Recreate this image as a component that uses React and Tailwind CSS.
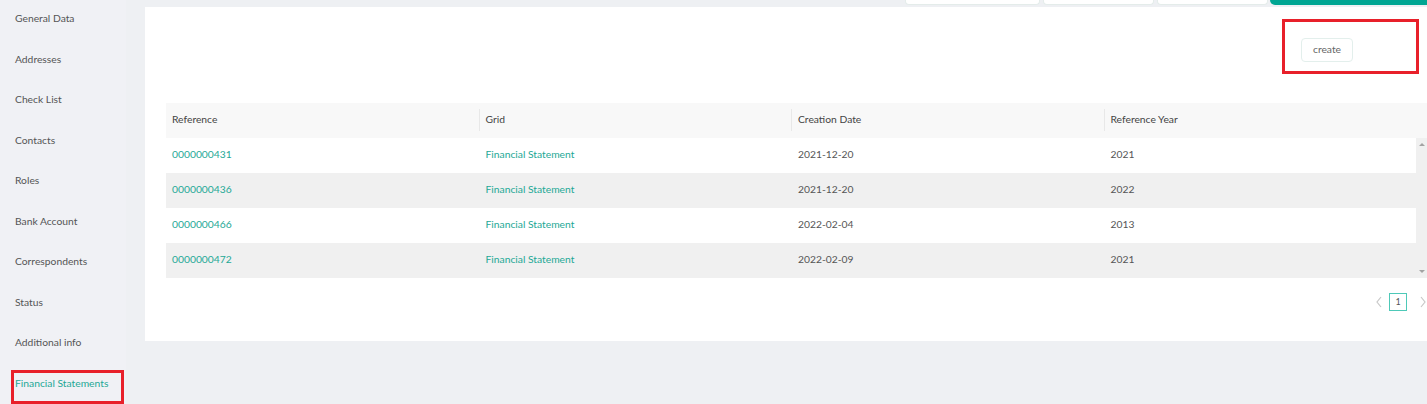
import React from 'react';

const menu = [
  'General Data',
  'Addresses',
  'Check List',
  'Contacts',
  'Roles',
  'Bank Account',
  'Correspondents',
  'Status',
  'Additional info',
  'Financial Statements',
];

const rows = [
  { ref: '0000000431', grid: 'Financial Statement', date: '2021-12-20', year: '2021' },
  { ref: '0000000436', grid: 'Financial Statement', date: '2021-12-20', year: '2022' },
  { ref: '0000000466', grid: 'Financial Statement', date: '2022-02-04', year: '2013' },
  { ref: '0000000472', grid: 'Financial Statement', date: '2022-02-09', year: '2021' },
];

const Chevron = ({ left }) => (
  <svg width="8" height="12" viewBox="0 0 8 12" fill="none" stroke="#c8c8c8" strokeWidth="1.2">
    {left ? <path d="M6 1L2 6l4 5" /> : <path d="M2 1l4 5-4 5" />}
  </svg>
);

export default function App() {
  return (
    <div className="flex h-[404px] w-[1427px] overflow-hidden bg-[#eef0f3] text-[10.3px] text-[#555]" style={{ fontFamily: 'Lato, "Open Sans", sans-serif' }}>
      {/* sidebar */}
      <div className="flex w-[126px] shrink-0 flex-col bg-[#f0f1f5] pt-[11px]">
        {menu.map((m, i) => {
          const active = i === menu.length - 1;
          return (
            <div key={m} className="relative h-[40.5px] shrink-0 pl-[15px] leading-[14px]">
              {active && <div className="absolute left-[11px] top-[-6px] h-[34px] w-[113px] border-[3px] border-[#e8202a]" />}
              <span className={active ? 'text-[#1ea896]' : 'text-[#555]'}>{m}</span>
            </div>
          );
        })}
      </div>

      {/* main */}
      <div className="ml-[19px] flex flex-1 flex-col">
        {/* tabs strip */}
        <div className="flex h-[7px] items-start justify-end">
          <div className="h-[5px] w-[135px] rounded-b border-x border-b border-[#e4ecea] bg-white" />
          <div className="ml-[3px] h-[5px] w-[111px] rounded-b border-x border-b border-[#e4ecea] bg-white" />
          <div className="ml-[3px] h-[5px] w-[111px] rounded-b border-x border-b border-[#e4ecea] bg-white" />
          <div className="ml-[2px] h-[5px] w-[158px] rounded-bl-md bg-[#00a693]" />
        </div>

        <div className="h-[334px] bg-white pl-[21px]">
          {/* create */}
          <div className="flex justify-end pr-[9px] pt-[12px]">
            <div className="flex h-[55px] w-[137px] items-start justify-start border-[3px] border-[#e8202a] pl-[16px] pt-[16px]">
              <button className="h-[24px] w-[52px] rounded border border-[#e3efec] bg-white text-[10.3px] text-[#666]">create</button>
            </div>
          </div>

          {/* table */}
          <div className="mt-[29px]">
            <div className="flex h-[35px] items-center bg-[#f8f8f8] pb-[2px] text-[#444]">
              {['Reference', 'Grid', 'Creation Date', 'Reference Year'].map((h, i) => (
                <div key={h} className="flex h-full w-[312.5px] items-center">
                  {i > 0 && <div className="h-[22px] w-px bg-[#e8e8e8]" />}
                  <span className="pl-[6px]">{h}</span>
                </div>
              ))}
            </div>
            <div className="flex">
              <div className="flex-1">
                {rows.map((r, i) => (
                  <div key={r.ref} className={`flex h-[35px] items-center pb-[1px] ${i % 2 ? 'bg-[#f0f0f0]' : 'bg-white'}`}>
                    <div className="w-[312.5px] pl-[6px] text-[#1ea896]">{r.ref}</div>
                    <div className="w-[312.5px] pl-[7px] text-[#1ea896]">{r.grid}</div>
                    <div className="w-[312.5px] pl-[7px]">{r.date}</div>
                    <div className="w-[312.5px] pl-[7px]">{r.year}</div>
                  </div>
                ))}
              </div>
              <div className="flex w-[12px] flex-col items-center justify-between bg-[#f0f0f0] py-[5px]">
                <div className="h-0 w-0 border-x-[3px] border-b-[3px] border-x-transparent border-b-[#a3a3a3]" />
                <div className="h-0 w-0 border-x-[3px] border-t-[3px] border-x-transparent border-t-[#a3a3a3]" />
              </div>
            </div>
          </div>

          {/* pager */}
          <div className="mt-[15px] flex items-center justify-end gap-[6px] pr-[1px]">
            <Chevron left />
            <div className="flex h-[18px] w-[18px] items-center justify-center border border-[#4ec9b8] text-[9px] text-[#555]">1</div>
            <div className="ml-[6px]"><Chevron /></div>
          </div>
        </div>
      </div>
    </div>
  );
}
